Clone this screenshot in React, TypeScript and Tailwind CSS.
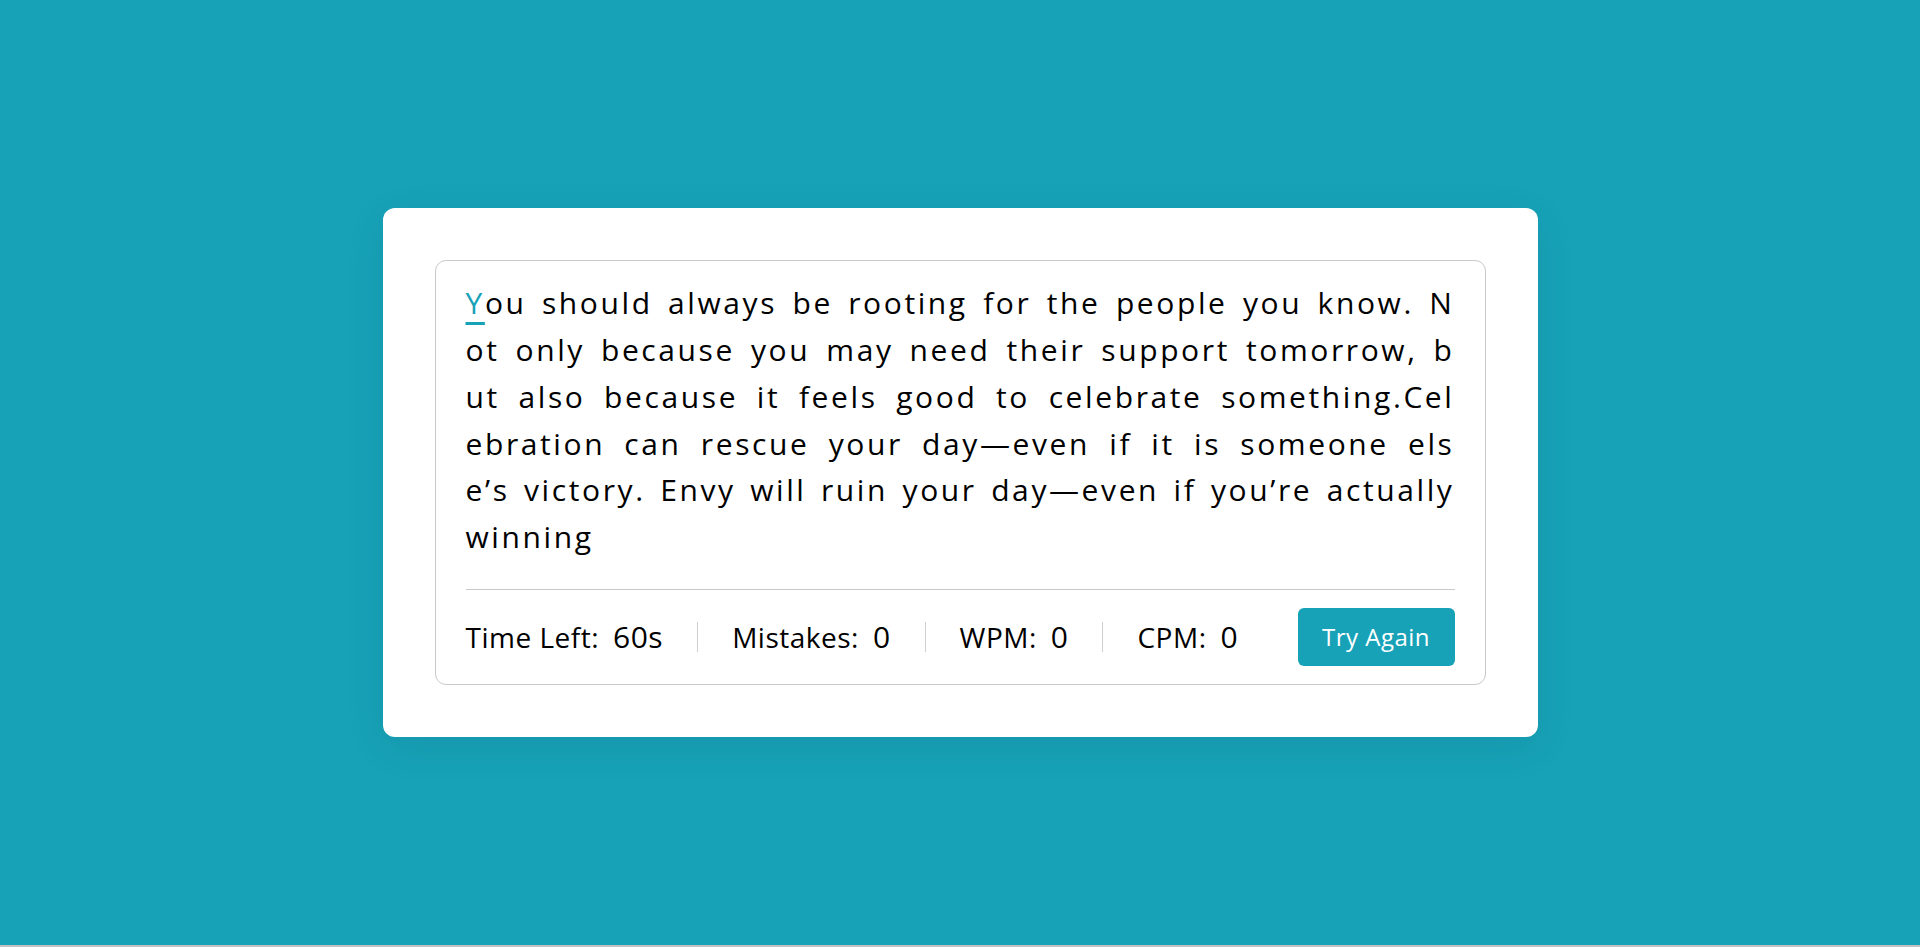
const LINES = [
  "ou should always be rooting for the people you know. N",
  "ot only because you may need their support tomorrow, b",
  "ut also because it feels good to celebrate something.Cel",
  "ebration can rescue your day—even if it is someone els",
  "e’s victory. Envy will ruin your day—even if you’re actually",
];

const STATS = [
  { label: "Time Left:", value: "60s" },
  { label: "Mistakes:", value: "0" },
  { label: "WPM:", value: "0" },
  { label: "CPM:", value: "0" },
];

export default function App() {
  return (
    <div className="flex flex-col h-[947px] font-['Open_Sans',sans-serif] text-black">
      <main className="flex-1 bg-[#17a2b8] flex items-center justify-center">
        <div className="w-[1155px] bg-white rounded-[12px] p-[52px] shadow-[0_10px_40px_rgba(0,0,0,0.08)]">
          <div className="border border-[#c9c9c9] rounded-[11px] px-[30px]">
            <div className="pt-[19px] pb-[28px] text-[30px] leading-[46.7px] tracking-[2.6px]">
              <div className="text-justify [text-align-last:justify]">
                <span className="text-[#17a2b8] underline decoration-[#17a2b8] decoration-[3px] underline-offset-[8px]">Y</span>
                {LINES[0]}
              </div>
              {LINES.slice(1).map((line) => (
                <div key={line} className="text-justify [text-align-last:justify]">
                  {line}
                </div>
              ))}
              <div>winning</div>
            </div>

            <div className="border-t border-[#c9c9c9] py-[18px] flex items-center justify-between">
              <ul className="flex items-center">
                {STATS.map((s, i) => (
                  <li
                    key={s.label}
                    className={
                      i === 0
                        ? "flex items-baseline gap-[14px] pr-[34px] text-[28px] leading-[30px] tracking-[0.5px]"
                        : "flex items-baseline gap-[14px] px-[34px] border-l border-[#cfcfcf] text-[28px] leading-[30px] tracking-[0.5px]"
                    }
                  >
                    <span>{s.label}</span>
                    <span className="font-medium text-[30px]">{s.value}</span>
                  </li>
                ))}
              </ul>
              <button className="w-[157px] h-[58px] rounded-[6px] bg-[#17a2b8] text-white text-[24px] tracking-[0.5px]">
                Try Again
              </button>
            </div>
          </div>
        </div>
      </main>
      <div className="h-[2px] bg-[#c3c3c3]" />
    </div>
  );
}
